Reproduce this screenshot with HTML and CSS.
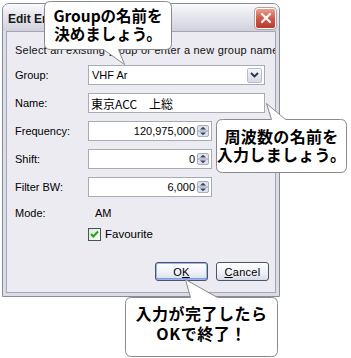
FILE: index.html
```html
<!DOCTYPE html>
<html>
<head>
<meta charset="utf-8">
<link rel="stylesheet" href="styles.css">
</head>
<body>
<div class="stage">
  <div class="dialog">
    <div class="titlebar">
      <span class="title">Edit Entry</span>
      <span class="close">
        <svg width="12" height="12" viewBox="0 0 12 12"><path d="M2 2 L10 10 M10 2 L2 10" stroke="#fff" stroke-width="2.2" stroke-linecap="round"/></svg>
      </span>
    </div>
    <div class="client">
      <p class="hint">Select an existing group or enter a new group name</p>
      <div class="row">
        <span class="label">Group:</span>
        <div class="field combo">
          <span class="value">VHF Ar</span>
          <span class="drop"><svg width="9" height="6" viewBox="0 0 9 6"><path d="M1 1 L4.5 4.5 L8 1" fill="none" stroke="#2b2f45" stroke-width="1.8"/></svg></span>
        </div>
      </div>
      <div class="row">
        <span class="label">Name:</span>
        <div class="field text"><span class="value jp">東京ACC　上総</span></div>
      </div>
      <div class="row">
        <span class="label">Frequency:</span>
        <div class="field num"><span class="value">120,975,000</span><span class="spin"><svg width="12" height="12" viewBox="0 0 12 12"><rect x="0.5" y="0.5" width="11" height="11" rx="1.5" fill="#dfe3ee" stroke="#a6adc0"/><line x1="1" y1="6" x2="11" y2="6" stroke="#9aa2b8"/><path d="M3 4.5 L6 1.8 L9 4.5 Z" fill="#3a3f55"/><path d="M3 7.5 L6 10.2 L9 7.5 Z" fill="#3a3f55"/></svg></span></div>
      </div>
      <div class="row">
        <span class="label">Shift:</span>
        <div class="field num"><span class="value">0</span><span class="spin"><svg width="12" height="12" viewBox="0 0 12 12"><rect x="0.5" y="0.5" width="11" height="11" rx="1.5" fill="#dfe3ee" stroke="#a6adc0"/><line x1="1" y1="6" x2="11" y2="6" stroke="#9aa2b8"/><path d="M3 4.5 L6 1.8 L9 4.5 Z" fill="#3a3f55"/><path d="M3 7.5 L6 10.2 L9 7.5 Z" fill="#3a3f55"/></svg></span></div>
      </div>
      <div class="row">
        <span class="label">Filter BW:</span>
        <div class="field num"><span class="value">6,000</span><span class="spin"><svg width="12" height="12" viewBox="0 0 12 12"><rect x="0.5" y="0.5" width="11" height="11" rx="1.5" fill="#dfe3ee" stroke="#a6adc0"/><line x1="1" y1="6" x2="11" y2="6" stroke="#9aa2b8"/><path d="M3 4.5 L6 1.8 L9 4.5 Z" fill="#3a3f55"/><path d="M3 7.5 L6 10.2 L9 7.5 Z" fill="#3a3f55"/></svg></span></div>
      </div>
      <div class="row mode">
        <span class="label">Mode:</span>
        <span class="mode-val">AM</span>
      </div>
      <div class="row check">
        <span class="label"></span>
        <span class="box"><svg width="11" height="11" viewBox="0 0 11 11"><path d="M2 5 L4.3 7.5 L9 2.5" fill="none" stroke="#21a121" stroke-width="2"/></svg></span>
        <span class="check-label">Favourite</span>
      </div>
      <div class="buttons">
        <span class="btn ok">O<u>K</u></span>
        <span class="btn"><u>C</u>ancel</span>
      </div>
    </div>
  </div>

  <svg class="bubbles" width="351" height="358" viewBox="0 0 351 358">
    <path d="M50.5 1.5 L165.5 1.5 Q171.5 1.5 171.5 7.5 L171.5 43.5 Q171.5 49.5 165.5 49.5 L118.5 49.5 L124.5 64.5 L103.5 49.5 L50.5 49.5 Q44.5 49.5 44.5 43.5 L44.5 7.5 Q44.5 1.5 50.5 1.5 Z" fill="#fff" stroke="#8a8a8a"/>
    <path d="M222.5 119.5 L271.5 119.5 L266.5 103.5 L285.5 119.5 L340.5 119.5 Q346.5 119.5 346.5 125.5 L346.5 166.5 Q346.5 172.5 340.5 172.5 L222.5 172.5 Q216.5 172.5 216.5 166.5 L216.5 125.5 Q216.5 119.5 222.5 119.5 Z" fill="#fff" stroke="#8a8a8a"/>
    <path d="M131.5 297.5 L190.5 297.5 L185.5 279.5 L217.5 297.5 L271.5 297.5 Q277.5 297.5 277.5 303.5 L277.5 350.5 Q277.5 356.5 271.5 356.5 L131.5 356.5 Q125.5 356.5 125.5 350.5 L125.5 303.5 Q125.5 297.5 131.5 297.5 Z" fill="#fff" stroke="#8a8a8a"/>
  </svg>
  <div class="note n1">Groupの名前を<br>決めましょう。</div>
  <div class="note n2">周波数の名前を<br>入力しましょう。</div>
  <div class="note n3">入力が完了したら<br>OKで終了！</div>
</div>
</body>
</html>
```

FILE: styles.css
```css
html, body {
  margin: 0;
  padding: 0;
  background: #fff;
}
.stage {
  position: relative;
  width: 351px;
  height: 358px;
  overflow: hidden;
  font-family: "Liberation Sans", Arial, sans-serif;
  font-size: 11px;
  color: #000;
}
.dialog {
  margin: 3px 0 0 2px;
  width: 278px;
  box-sizing: border-box;
  border: 1px solid #858c9c;
  border-radius: 7px 7px 0 0;
  background: #dcdce6;
  padding: 0 3px 3px;
}
.titlebar {
  height: 27px;
  display: flex;
  align-items: center;
  justify-content: space-between;
  margin: 0 -3px;
  padding: 0 3px 0 5px;
  border-radius: 6px 6px 0 0;
  background: linear-gradient(#fbfbfd 0%, #e9e9f0 35%, #dddde6 70%, #cfd0dc 100%);
}
.title {
  font-weight: bold;
  font-size: 12px;
  color: #1a1a1a;
  padding-top: 2px;
}
.close {
  width: 19px;
  height: 19px;
  border: 1px solid #fff;
  outline: 1px solid #b8a0a0;
  border-radius: 3px;
  background: linear-gradient(#e9a090, #cf5a4a 50%, #b83a30);
  display: flex;
  align-items: center;
  justify-content: center;
  margin-top: 1px;
}
.client {
  background: #ecebf1;
  border: 1px solid #a4a6b2;
  padding: 11px 0 11px 8px;
}
.hint {
  margin: 0;
  line-height: 14px;
  white-space: nowrap;
  overflow: hidden;
  letter-spacing: 0.22px;
  color: #111;
}
.row {
  display: flex;
  align-items: center;
  height: 20px;
  margin-top: 8px;
}
.label {
  width: 73px;
  flex: none;
}
.field {
  box-sizing: border-box;
  height: 20px;
  background: #fff;
  border: 1px solid #a5acb5;
  display: flex;
  align-items: center;
}
.combo, .text {
  width: 177px;
}
.num {
  width: 124px;
  justify-content: flex-end;
}
.value {
  padding: 0 3px;
  font-size: 11px;
}
.combo .value { flex: 1; }
.text .value.jp {
  font-family: "Noto Sans CJK JP", sans-serif;
  font-size: 12px;
  padding-left: 2px;
}
.num .value { padding-right: 2px; }
.drop {
  width: 15px;
  height: 15px;
  margin-right: 2px;
  box-sizing: border-box;
  border: 1px solid #b8bfd2;
  border-radius: 2px;
  background: linear-gradient(#f4f5f9, #d6dae6);
  display: flex;
  align-items: center;
  justify-content: center;
}
.spin {
  display: flex;
  margin-right: 2px;
}
.row.mode {
  height: 14px;
  margin-top: 9px;
}
.mode-val { padding-left: 7px; }
.row.check {
  height: 14px;
  margin-top: 7px;
}
.box {
  width: 13px;
  height: 13px;
  box-sizing: border-box;
  border: 1px solid #3c5a4a;
  background: linear-gradient(135deg, #dfe8dc, #fafdf8);
  display: flex;
  align-items: center;
  justify-content: center;
}
.check-label {
  padding-left: 4px;
  font-size: 11.5px;
}
.buttons {
  display: flex;
  gap: 8px;
  margin-top: 21px;
  padding-left: 140px;
}
.btn {
  box-sizing: border-box;
  width: 53px;
  height: 19px;
  border: 1px solid #4a5568;
  border-radius: 3px;
  background: linear-gradient(#ffffff, #eef0f6 60%, #d8dbe6);
  display: flex;
  align-items: center;
  justify-content: center;
  font-size: 11px;
  letter-spacing: 0.3px;
}
.btn.ok {
  box-shadow: inset 0 0 0 1px #9bb4e8, inset 0 -1px 0 1px #7f9de0;
}
.bubbles {
  position: absolute;
  left: 0;
  top: 0;
}
.note {
  position: absolute;
  font-family: "Noto Sans CJK JP", sans-serif;
  font-weight: bold;
  color: #000;
  text-align: center;
  white-space: nowrap;
}
.n1 {
  left: 44px;
  top: 6px;
  width: 128px;
  font-size: 15.5px;
  line-height: 18px;
}
.n2 {
  left: 216px;
  top: 127px;
  width: 131px;
  font-size: 16px;
  line-height: 18px;
  letter-spacing: 0.3px;
}
.n3 {
  left: 125px;
  top: 303px;
  width: 153px;
  font-size: 16px;
  line-height: 20px;
  letter-spacing: 0.5px;
}
```
